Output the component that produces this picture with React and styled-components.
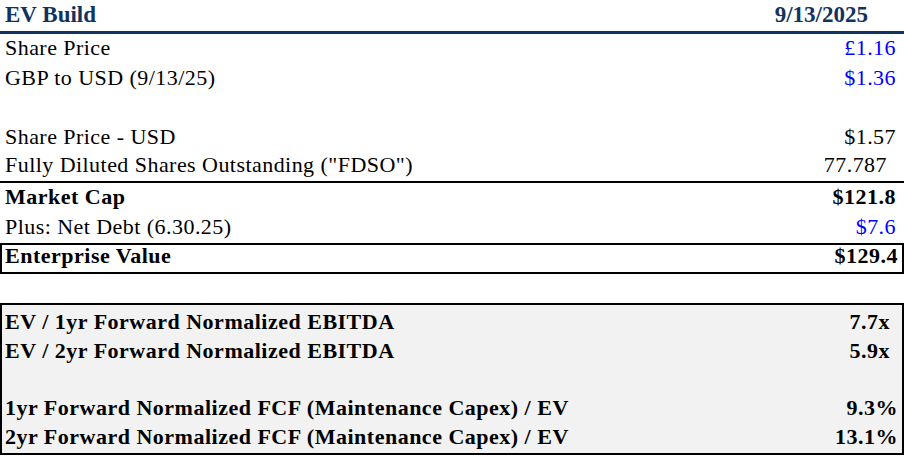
import React from 'react'
import styled, { createGlobalStyle } from 'styled-components'

const navy = '#10335f'
const inputBlue = '#0000ff'

const Global = createGlobalStyle`
  body {
    margin: 0;
    background: #ffffff;
    font-family: "Liberation Serif", "Times New Roman", serif;
    color: #000000;
  }
`

const Sheet = styled.div`
  width: 904px;
  display: flex;
  flex-direction: column;
`

// Header
const Header = styled.div`
  height: 34px;
  border-bottom: 3px solid ${navy};
  display: flex;
  align-items: flex-end;
  justify-content: space-between;
  padding: 0 36px 5px 5px;
  box-sizing: border-box;
  color: ${navy};
  font-size: 23px;
  font-weight: bold;
  line-height: 1;
`

const Row = styled.div`
  height: ${({ h }) => h || 29.8}px;
  display: flex;
  align-items: flex-end;
  justify-content: space-between;
  padding: 0 8px 5px 5px;
  box-sizing: border-box;
  font-size: 22px;
  line-height: 1;
  letter-spacing: ${({ bold }) => (bold ? 0.5 : 0.45)}px;
  font-weight: ${({ bold }) => (bold ? 'bold' : 'normal')};
  ${({ rule }) => rule && `border-bottom: 2px solid #000;`}
  ${({ boxed }) => boxed && `border-left: 2px solid #000; border-right: 2px solid #000; padding-left: 3px; padding-right: 4px;`}
`

const Label = styled.span`
  white-space: pre;
`

const Value = styled.span`
  white-space: pre;
  color: ${({ blue }) => (blue ? inputBlue : 'inherit')};
  padding-right: ${({ inset }) => inset || 0}px;
`

const Gap = styled.div`
  height: 29px;
`

// Multiples box
const Box = styled.div`
  border: 2px solid #000;
  background: #f2f2f2;
  padding-top: 4px;
  box-sizing: border-box;
  height: 152px;
  display: flex;
  flex-direction: column;
`

const BoxRow = styled.div`
  height: 29px;
  display: flex;
  align-items: flex-end;
  justify-content: space-between;
  padding: 0 4px 5px 3px;
  box-sizing: border-box;
  font-size: 22px;
  font-weight: bold;
  letter-spacing: 0.5px;
  line-height: 1;
`

const rows = [
  { label: 'Share Price', value: '£1.16', blue: true },
  { label: 'GBP to USD (9/13/25)', value: '$1.36', blue: true },
  { blank: true },
  { label: 'Share Price - USD', value: '$1.57' },
  { label: 'Fully Diluted Shares Outstanding ("FDSO")', value: '77.787', inset: 9, rule: true },
  { label: 'Market Cap', value: '$121.8', bold: true, h: 30 },
  { label: 'Plus: Net Debt (6.30.25)', value: '$7.6', blue: true, rule: true, h: 32 },
  { label: 'Enterprise Value', value: '$129.4', bold: true, rule: true, boxed: true, h: 29 },
]

const multiples = [
  { label: 'EV / 1yr Forward Normalized EBITDA', value: '7.7x', inset: 8 },
  { label: 'EV / 2yr Forward Normalized EBITDA', value: '5.9x', inset: 8 },
  { blank: true },
  { label: '1yr Forward Normalized FCF (Maintenance Capex) / EV', value: '9.3%' },
  { label: '2yr Forward Normalized FCF (Maintenance Capex) / EV', value: '13.1%' },
]

export default function App() {
  return (
    <>
      <Global />
      <Sheet>
        <Header>
          <span>EV Build</span>
          <span>9/13/2025</span>
        </Header>
        {rows.map((r, i) =>
          r.blank ? (
            <Row key={i} />
          ) : (
            <Row key={i} bold={r.bold} rule={r.rule} boxed={r.boxed} h={r.h}>
              <Label>{r.label}</Label>
              <Value blue={r.blue} inset={r.inset}>{r.value}</Value>
            </Row>
          )
        )}
        <Gap />
        <Box>
          {multiples.map((m, i) =>
            m.blank ? (
              <BoxRow key={i} />
            ) : (
              <BoxRow key={i}>
                <Label>{m.label}</Label>
                <Value inset={m.inset}>{m.value}</Value>
              </BoxRow>
            )
          )}
        </Box>
      </Sheet>
    </>
  )
}
